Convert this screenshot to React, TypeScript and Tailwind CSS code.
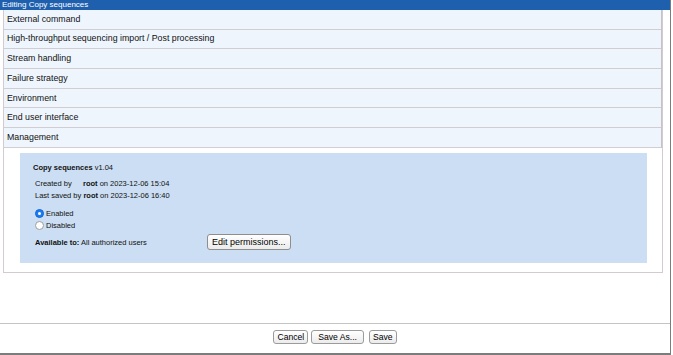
import React, { useState } from 'react';

const sections = [
  'External command',
  'High-throughput sequencing import / Post processing',
  'Stream handling',
  'Failure strategy',
  'Environment',
  'End user interface',
  'Management',
];

function Radio({ checked, label, onClick }: { checked: boolean; label: string; onClick: () => void }) {
  return (
    <div className="flex items-center h-[12px] cursor-default" onClick={onClick}>
      {checked ? (
        <span className="w-[9px] h-[9px] rounded-full bg-[#1a7cf5] border border-[#1567d3] flex items-center justify-center">
          <span className="w-[3px] h-[3px] rounded-full bg-white" />
        </span>
      ) : (
        <span className="w-[9px] h-[9px] rounded-full bg-white border border-[#9d9d9d]" />
      )}
      <span className="ml-[2px] text-[7.5px]">{label}</span>
    </div>
  );
}

function Btn({ children, className = '' }: { children: React.ReactNode; className?: string }) {
  return (
    <button
      type="button"
      className={`h-[14px] border border-[#9b9b9b] rounded-[3px] bg-gradient-to-b from-white to-[#ececec] text-[8.6px] leading-[12px] text-black ${className}`}
    >
      {children}
    </button>
  );
}

export default function App() {
  const [enabled, setEnabled] = useState(true);

  return (
    <div className="w-[673px] h-[355px] bg-white" style={{ fontFamily: '"Liberation Sans", Arial, sans-serif' }}>
      <div className="w-[671px] h-[355px] border-r border-b-2 border-[#7c7c7c] flex flex-col">
        <div className="h-[10px] bg-[#1e5fae] text-white text-[8px] leading-[10px] pl-[2px]">Editing Copy sequences</div>

        <div className="ml-[3px] w-[660px] border-x border-b border-[#d3cbcf]">
          <div className="border-r border-[#c6c2c6]">
            {sections.map((s) => (
              <div
                key={s}
                className="h-[19.7px] bg-[#eef5fd] border-b border-[#d2cdd1] flex items-center pl-[3px] text-[8.8px] text-[#111]"
              >
                {s}
              </div>
            ))}
          </div>

          <div className="ml-[16px] mr-[15px] mt-[5px] mb-[9px] h-[110px] bg-[#cbdef3] pl-[13px] pt-[10px] text-[#111]">
            <div className="text-[7.5px] leading-[10px]">
              <span className="font-bold">Copy sequences</span> v1.04
            </div>
            <div className="pl-[2px] mt-[5px] text-[7.5px] leading-[12px]">
              <div>
                <span className="inline-block w-[48px]">Created by</span>
                <span className="font-bold">root</span> on 2023-12-06 15:04
              </div>
              <div>
                Last saved by <span className="font-bold">root</span> on 2023-12-06 16:40
              </div>
            </div>
            <div className="pl-[2px] mt-[6px]">
              <Radio checked={enabled} label="Enabled" onClick={() => setEnabled(true)} />
              <Radio checked={!enabled} label="Disabled" onClick={() => setEnabled(false)} />
            </div>
            <div className="pl-[2px] mt-[2px] flex items-center h-[17px]">
              <span className="text-[7.5px] w-[172px]">
                <span className="font-bold">Available to:</span> All authorized users
              </span>
              <button
                type="button"
                className="h-[16px] px-[4px] border border-[#8e8e8e] rounded-[3px] bg-gradient-to-b from-white to-[#ebebeb] text-[9px] leading-[14px] text-black"
              >
                Edit permissions...
              </button>
            </div>
          </div>
        </div>

        <div className="flex-1" />

        <div className="h-[30px] border-t border-[#c4c4c4] flex justify-center pt-[6px]">
          <Btn className="px-[3px]">Cancel</Btn>
          <Btn className="ml-[3px] px-[6px]">Save As...</Btn>
          <Btn className="ml-[5px] px-[3px]">Save</Btn>
        </div>
      </div>
    </div>
  );
}
